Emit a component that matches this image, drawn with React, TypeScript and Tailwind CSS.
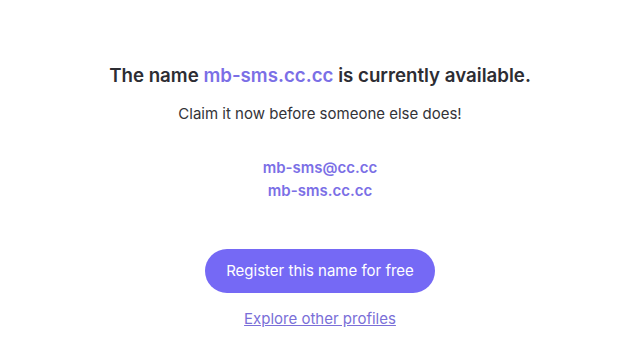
export default function App() {
  return (
    <div className="flex h-[360px] w-[640px] flex-col items-center bg-white pt-[63px] font-['Inter',sans-serif] text-[#2d2d33]">
      <h1 className="text-[18.7px] font-semibold leading-[26px]">
        The name <span className="text-[#7b6fe6]">mb-sms.cc.cc</span> is currently available.
      </h1>
      <p className="mt-[13px] text-[15px] leading-[24px] text-[#333338]">Claim it now before someone else does!</p>
      <div className="mt-[30px] flex flex-col items-center text-[15px] font-semibold leading-[23px] text-[#7b6fe6]">
        <span>mb-sms@cc.cc</span>
        <span>mb-sms.cc.cc</span>
      </div>
      <button className="mt-[47px] h-[44px] rounded-full bg-[#7569f5] px-[21px] text-[15px] text-white">
        Register this name for free
      </button>
      <a href="#" className="mt-[15px] text-[15px] leading-[22px] text-[#7a6fd8] underline">
        Explore other profiles
      </a>
    </div>
  );
}
